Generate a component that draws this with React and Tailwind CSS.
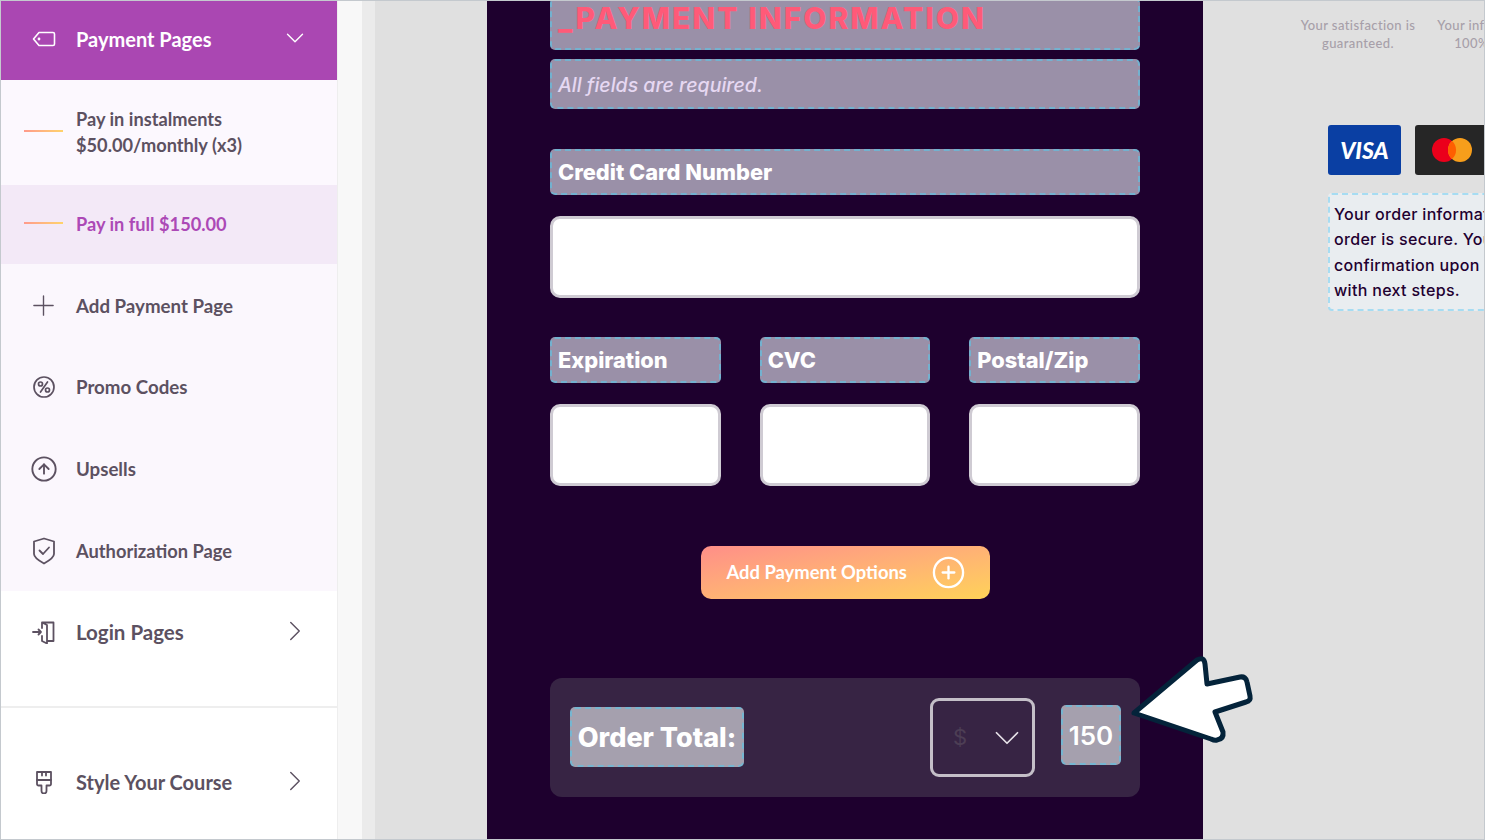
import React from "react";
import { ChevronDown, ChevronRight, CircleArrowUp, CirclePlus, Plus } from "lucide-react";

const sideFont = "font-['Lato','Liberation_Sans',sans-serif]";
const formFont = "font-['Inter','Liberation_Sans',sans-serif]";

// Little price tag used on the header row
const TagIcon = () => (
  <svg width="24" height="16" viewBox="0 0 24 16" fill="none" stroke="currentColor" strokeWidth="1.6" strokeLinejoin="round">
    <path d="M7 1.500h14a1.500 1.500 0 0 1 1.500 1.500v10a1.500 1.500 0 0 1-1.500 1.500H7L1.500 8z" />
    <circle cx="7" cy="8" r="0.6" />
  </svg>
);

const PercentIcon = () => (
  <svg width="24" height="24" viewBox="0 0 24 24" fill="none" stroke="currentColor" strokeWidth="1.7" strokeLinecap="round">
    <circle cx="12" cy="12" r="10" />
    <path d="M15.500 7 8.500 17" />
    <circle cx="8.500" cy="9" r="2" />
    <circle cx="15.500" cy="15" r="2" />
  </svg>
);

const ShieldIcon = () => (
  <svg width="24" height="28" viewBox="0 0 24 28" fill="none" stroke="currentColor" strokeWidth="1.8" strokeLinejoin="round" strokeLinecap="round">
    <path d="M12 1.500 22 4.500V17q0 4-10 9.500Q2 21 2 17V4.500z" />
    <path d="m7.500 13.500 3.500 3.500 6-6.500" />
  </svg>
);

const DoorIcon = () => (
  <svg width="24" height="24" viewBox="0 0 24 24" fill="none" stroke="currentColor" strokeWidth="1.8" strokeLinejoin="round" strokeLinecap="round">
    <path d="M1 12h8M6.500 9.500 9 12l-2.500 2.500" />
    <path d="M10 8V2.500l5 2.500v18.500l-5-2.500v-5M10 2.500h11.500v18.500H15" />
  </svg>
);

const BrushIcon = () => (
  <svg width="18" height="24" viewBox="0 0 18 24" fill="none" stroke="currentColor" strokeWidth="1.8" strokeLinejoin="round" strokeLinecap="round">
    <path d="M2 2h14v12a1.500 1.500 0 0 1-1.500 1.500H11.500V21a2.500 2.500 0 0 1-5 0v-5.500H3.500A1.500 1.500 0 0 1 2 14z" />
    <path d="M2 10h14M7 2v3.500M11 2v3.500" />
  </svg>
);

const AccentLine = () => (
  <div className="h-[2px] w-[39px] -mt-[4px] bg-gradient-to-r from-[#ff9a8b] to-[#ffd36a]" />
);

function SideRow({ icon, children, right, textClass = "text-[18.700px]" }) {
  return (
    <div className="flex items-center h-[81.6px] pl-[23px] pr-[25px]">
      <div className="w-[39px] flex justify-center shrink-0">{icon}</div>
      <div className={`ml-[13px] flex-1 leading-[26px] font-bold text-[#5c5161] ${textClass}`}>{children}</div>
      {right}
    </div>
  );
}

function Label({ children, className = "" }) {
  return (
    <div className={`h-[46px] flex items-center px-[6px] rounded-[5px] bg-[#9a90a8] border-2 border-dashed border-[#63bfe0]/70 text-[21.800px] font-extrabold text-white ${className}`}>
      {children}
    </div>
  );
}

const Field = ({ className = "" }) => (
  <div className={`bg-white border-[3px] border-[#cfcbd3] rounded-[10px] ${className}`} />
);

function Sidebar() {
  const iconClass = "text-[#5c5161]";
  const arrow = <ChevronRight size={34} strokeWidth={1} className="text-[#5c5161] -mt-[2px]" />;
  return (
    <aside className={`w-[336px] shrink-0 bg-white flex flex-col ${sideFont}`}>
      <div className="h-[79px] bg-[#aa47b2] flex items-center pl-[23px] pr-[27px] text-white">
        <div className="w-[39px] flex justify-center -mt-[3px]"><TagIcon /></div>
        <div className="ml-[13px] flex-1 text-[20px] font-bold -mt-[3px]">Payment Pages</div>
        <ChevronDown size={30} strokeWidth={1.1} className="-mt-[5px]" />
      </div>
      <div className="h-[105px] bg-[#fcf8fe] flex items-center pl-[23px]">
        <AccentLine />
        <div className="ml-[13px] -mt-[2px] text-[18.200px] leading-[26px] font-bold text-[#5c5161]">
          Pay in instalments<br />$50.00/monthly (x3)
        </div>
      </div>
      <div className="h-[79px] bg-[#f3e9f7] flex items-center pl-[23px]">
        <AccentLine />
        <div className="ml-[13px] text-[18.200px] font-bold text-[#ac49b6]">Pay in full $150.00</div>
      </div>
      <div className="bg-[#fbf7fd] pt-[1px]">
        <SideRow icon={<Plus size={33} strokeWidth={1} className={iconClass} />}>Add Payment Page</SideRow>
        <SideRow icon={<span className={iconClass}><PercentIcon /></span>}>Promo Codes</SideRow>
        <SideRow icon={<CircleArrowUp size={28} strokeWidth={1.6} className={iconClass} />}>Upsells</SideRow>
        <SideRow icon={<span className={iconClass}><ShieldIcon /></span>} textClass="text-[18.300px]">Authorization Page</SideRow>
      </div>
      <div className="h-[117px] border-b-2 border-[#eeeeee]">
        <SideRow icon={<span className={iconClass}><DoorIcon /></span>} right={arrow} textClass="text-[20.500px]">
          Login Pages
        </SideRow>
      </div>
      <div className="pt-[33px]">
        <SideRow icon={<span className={iconClass}><BrushIcon /></span>} right={arrow} textClass="text-[20px]">
          Style Your Course
        </SideRow>
      </div>
    </aside>
  );
}

function PaymentForm() {
  return (
    <main className={`w-[716px] shrink-0 bg-[#1e002e] px-[63px] flex flex-col overflow-hidden relative ${formFont}`}>
      <div className="h-[52px] -mt-[3px] shrink-0 px-[6px] rounded-[5px] bg-[#9a90a8] border-2 border-dashed border-[#63bfe0]/70 text-[30px] tracking-[2px] leading-[36px] font-extrabold text-[#ff5a78] whitespace-nowrap">
        _PAYMENT INFORMATION
      </div>
      <div className="h-[50px] mt-[9px] shrink-0 flex items-center px-[6px] pt-[3px] rounded-[5px] bg-[#9a90a8] border-2 border-dashed border-[#63bfe0]/70 text-[19.500px] italic font-medium text-[#e6d8f2]">
        All fields are required.
      </div>
      <Label className="mt-[40px] shrink-0">Credit Card Number</Label>
      <Field className="h-[82px] mt-[21px] shrink-0" />

      <div className="grid grid-cols-3 gap-x-[39px] mt-[39px] shrink-0">
        <Label>Expiration</Label>
        <Label>CVC</Label>
        <Label>Postal/Zip</Label>
      </div>
      <div className="grid grid-cols-3 gap-x-[39px] mt-[21px] shrink-0">
        <Field className="h-[82px]" />
        <Field className="h-[82px]" />
        <Field className="h-[82px]" />
      </div>

      <div className={`w-[289px] h-[53px] mt-[60px] shrink-0 self-center rounded-[10px] bg-gradient-to-br from-[#ff8e88] to-[#ffd257] flex items-center justify-between pl-[26px] pr-[24px] text-white ${sideFont}`}>
        <span className="text-[18.400px] font-bold">Add Payment Options</span>
        <CirclePlus size={35} strokeWidth={1.6} />
      </div>

      <div className="h-[119px] mt-[79px] shrink-0 rounded-[12px] bg-[#372444] flex items-center pl-[20px] pr-[19px]">
        <div className="w-[174px] h-[60px] -mt-[1px] pt-[2px] flex items-center justify-center rounded-[5px] bg-[#a5a0ae] border-2 border-dashed border-[#63bfe0]/70 text-[27px] font-extrabold text-white">
          Order Total:
        </div>
        <div className="w-[105px] h-[79px] ml-auto rounded-[9px] border-[3px] border-[#c4bfc8] flex items-center pl-[20px] pr-[4px]">
          <span className="text-[22px] text-[#4d3e55] flex-1">$</span>
          <ChevronDown size={42} strokeWidth={1} className="text-[#e6e1e8] mt-[1px]" />
        </div>
        <div className="w-[60px] h-[60px] ml-[26px] -mt-[6px] pt-[2px] flex items-center justify-center rounded-[5px] bg-[#a5a0ae] border-2 border-dashed border-[#63bfe0]/70 text-[26px] font-semibold text-white">
          150
        </div>
      </div>
    </main>
  );
}

function TrustPanel() {
  return (
    <section className={`flex-1 min-w-0 overflow-hidden bg-[#e0e0e0] ${sideFont}`}>
      <div className="flex gap-[19px] pl-[96px] pt-[15px] text-[13px] leading-[18px] font-medium tracking-[0.4px] text-[#a79fa9] text-center whitespace-nowrap">
        <div className="w-[118px] shrink-0">Your satisfaction is<br />guaranteed.</div>
        <div className="w-[118px] shrink-0">Your information is<br />100% secure.</div>
      </div>
      <div className="ml-[125px] mt-[73px] flex gap-[14px]">
        <div className="w-[73px] h-[50px] shrink-0 rounded-[3px] bg-[#0a3fa3] flex items-center justify-center text-[23px] italic font-black text-white">
          VISA
        </div>
        <div className="w-[73px] h-[50px] shrink-0 rounded-[3px] bg-[#262626] flex items-center justify-center">
          <svg width="40" height="24" viewBox="0 0 40 24">
            <circle cx="12" cy="12" r="12" fill="#eb001b" />
            <circle cx="28" cy="12" r="12" fill="#f79e1b" />
            <path d="M20 3a12 12 0 0 1 0 18a12 12 0 0 1 0-18z" fill="#ff5f00" />
          </svg>
        </div>
      </div>
      <div className={`ml-[125px] mt-[18px] w-[300px] h-[118px] rounded-[4px] bg-[#e9edf0] border-2 border-dashed border-[#a6dcf2] px-[4px] pt-[7px] text-[16px] tracking-[0.32px] leading-[25.300px] font-medium text-[#1f0030] whitespace-nowrap ${formFont}`}>
        Your order information is safe.<br />
        order is secure. You will receive<br />
        confirmation upon purchase<br />
        with next steps.
      </div>
    </section>
  );
}

export default function App() {
  return (
    <div className="w-[1485px] h-[840px] overflow-hidden relative border border-[#c4c9ce] flex bg-[#e0e0e0]">
      <Sidebar />
      <div className="w-[25px] shrink-0 bg-[#f8f8f8] border-l border-[#eeeeee]" />
      <div className="w-[13px] shrink-0 bg-[#ebebeb]" />
      <div className="w-[112px] shrink-0 bg-[#e0e0e0]" />
      <PaymentForm />
      <TrustPanel />

      {/* pointer arrow laid over the order total */}
      <svg className="absolute left-[1126px] top-[650px]" width="132" height="100" viewBox="0 0 132 100" fill="none">
        <path
          d="M7 62 L70 9 Q77 5 78 13 L80 33 L113 26 Q119 25 120 31 L123 45 Q124 50 119 51 L88 61 L96 81 Q97 88 90 89 Q88 90 84 88 Z"
          fill="#ffffff"
          stroke="#04233a"
          strokeWidth="5"
          strokeLinejoin="round"
        />
      </svg>
    </div>
  );
}
